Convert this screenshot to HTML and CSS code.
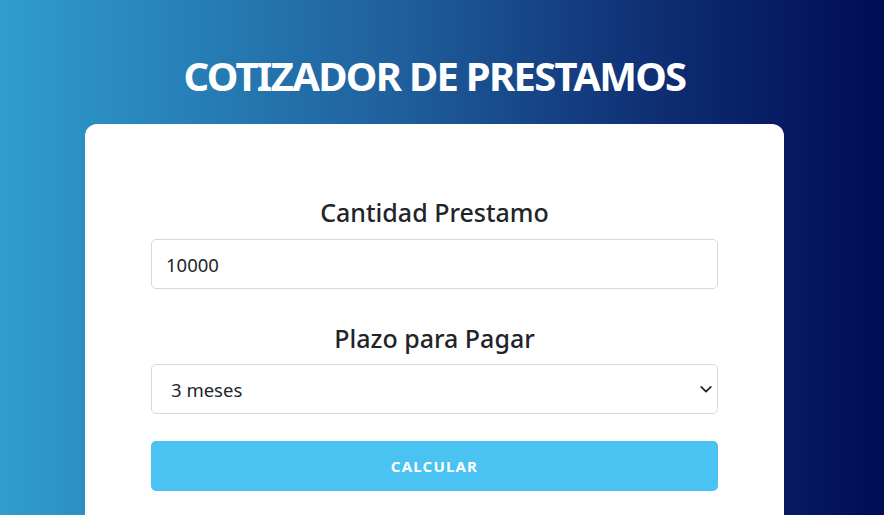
FILE: index.html
```html
<!DOCTYPE html>
<html lang="es">
<head>
<meta charset="utf-8">
<title>Cotizador de Prestamos</title>
<link rel="stylesheet" href="styles.css">
</head>
<body>
<main class="page">
  <h1 class="title">COTIZADOR DE PRESTAMOS</h1>
  <section class="card">
    <form class="form">
      <div class="field">
        <label class="label" for="cantidad">Cantidad Prestamo</label>
        <input class="input" id="cantidad" type="text" value="10000">
      </div>
      <div class="field">
        <label class="label" for="plazo">Plazo para Pagar</label>
        <div class="select-wrap">
          <select class="select" id="plazo">
            <option>3 meses</option>
            <option>6 meses</option>
            <option>12 meses</option>
            <option>24 meses</option>
          </select>
          <svg class="chevron" viewBox="0 0 16 16" width="14" height="14" aria-hidden="true"><path d="M2.5 5.5 8 11l5.5-5.5" fill="none" stroke="#212529" stroke-width="2" stroke-linecap="round" stroke-linejoin="round"/></svg>
        </div>
      </div>
      <button class="button" type="button">CALCULAR</button>
    </form>
  </section>
</main>
</body>
</html>
```

FILE: styles.css
```css
* { box-sizing: border-box; }
html, body { margin: 0; height: 100%; }
body {
  font-family: "Noto Sans", "Open Sans", sans-serif;
  color: #212529;
  background: linear-gradient(to right, #2f9dcf 0%, #1f5f9c 45%, #0e2d73 75%, #000c55 100%);
  overflow: hidden;
}
.page {
  display: flex;
  flex-direction: column;
  align-items: center;
  padding: 52px 15px 0 0;
  height: 100%;
}
.title {
  margin: 0 0 24px;
  color: #fff;
  font-size: 40px;
  line-height: 48px;
  font-weight: 700;
  letter-spacing: -1.7px;
}
.card {
  width: 699px;
  flex: 1;
  background: #fff;
  border-radius: 12px 12px 0 0;
  padding: 70px 66px 0;
}
.form { display: flex; flex-direction: column; }
.field { display: flex; flex-direction: column; }
.field + .field { margin-top: 31px; }
.label {
  text-align: center;
  font-size: 25px;
  line-height: 36px;
  font-weight: 500;
  margin-bottom: 9px;
}
.field + .field .label { margin-bottom: 8px; }
.input, .select {
  width: 100%;
  height: 50px;
  border: 1px solid #d6d9dc;
  border-radius: 5px;
  background: #fff;
  font-family: inherit;
  font-size: 18.5px;
  color: #212529;
  padding: 0 14px;
  outline: none;
}
.select-wrap { position: relative; }
.select {
  appearance: none;
  -webkit-appearance: none;
  padding-left: 19px;
}
.chevron {
  position: absolute;
  right: 5px;
  top: 18px;
  pointer-events: none;
}
.button {
  margin-top: 27px;
  height: 50px;
  border: 0;
  border-radius: 5px;
  background: #4bc3f2;
  color: #fff;
  font-family: inherit;
  font-weight: 700;
  font-size: 15px;
  letter-spacing: 1.2px;
}
```
